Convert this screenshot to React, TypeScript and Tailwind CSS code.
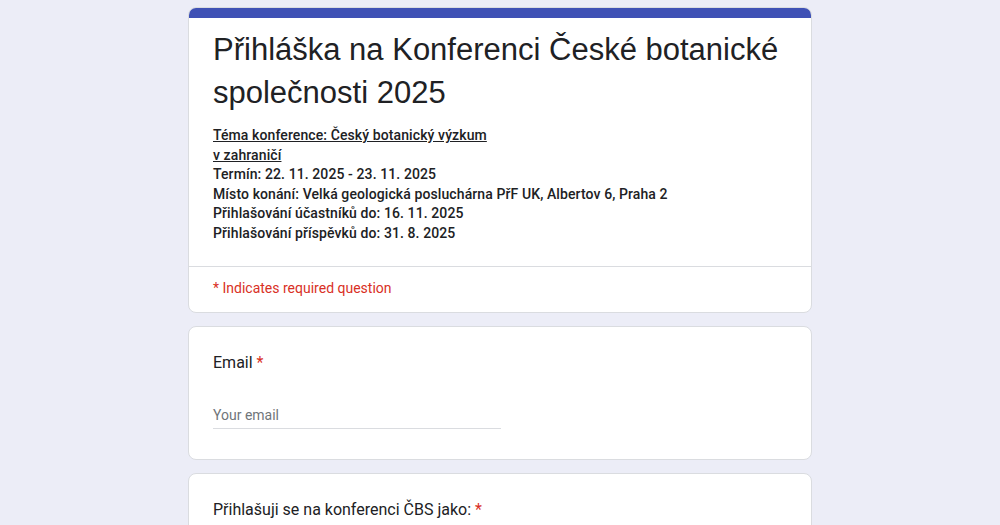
import React from "react";

export default function App() {
  const roboto = { fontFamily: "Roboto, 'Noto Sans', sans-serif" };
  const arial = { fontFamily: "'Liberation Sans', Arial, sans-serif" };
  return (
    <div className="w-[1000px] h-[525px] overflow-hidden bg-[#ecedf7]">
      <div className="w-[624px] mx-auto pt-[7px] flex flex-col gap-[13px]">
        {/* Header card */}
        <div className="bg-white rounded-lg border border-[#dadce0] overflow-hidden">
          <div className="h-[10px] bg-[#3f51b5]" />
          <div className="px-6 pt-[10px] pb-[22px]">
            <h1 className="text-[31px] leading-[43px] text-[#202124]" style={arial}>
              Přihláška na Konferenci České botanické společnosti 2025
            </h1>
            <div className="mt-[12px] text-[14px] leading-[19.6px] font-medium tracking-[0.1px] text-[#202124]" style={roboto}>
              <div className="underline">
                Téma konference: Český botanický výzkum
                <br />v zahraničí
              </div>
              <div>Termín: 22. 11. 2025 - 23. 11. 2025</div>
              <div>Místo konání: Velká geologická posluchárna PřF UK, Albertov 6, Praha 2</div>
              <div>Přihlašování účastníků do: 16. 11. 2025</div>
              <div>Přihlašování příspěvků do: 31. 8. 2025</div>
            </div>
          </div>
          <div className="border-t border-[#dadce0] px-6 pt-[11px] pb-[14px] text-[14px] leading-[20px] text-[#d93025]" style={roboto}>
            * Indicates required question
          </div>
        </div>

        {/* Email card */}
        <div className="bg-white rounded-lg border border-[#dadce0] px-6 pt-6 pb-[30px]">
          <div className="text-[16px] leading-[24px] text-[#202124]" style={roboto}>
            Email <span className="text-[#d93025]">*</span>
          </div>
          <div className="mt-[30px] w-[288px] border-b border-[#dadce0] pb-[3px] text-[14px] leading-[20px] text-[#70757a]" style={roboto}>
            Your email
          </div>
        </div>

        {/* Question card */}
        <div className="bg-white rounded-lg border border-[#dadce0] px-6 pt-6 pb-6 h-[120px]">
          <div className="text-[16px] leading-[24px] text-[#202124]" style={roboto}>
            Přihlašuji se na konferenci ČBS jako: <span className="text-[#d93025]">*</span>
          </div>
        </div>
      </div>
    </div>
  );
}
